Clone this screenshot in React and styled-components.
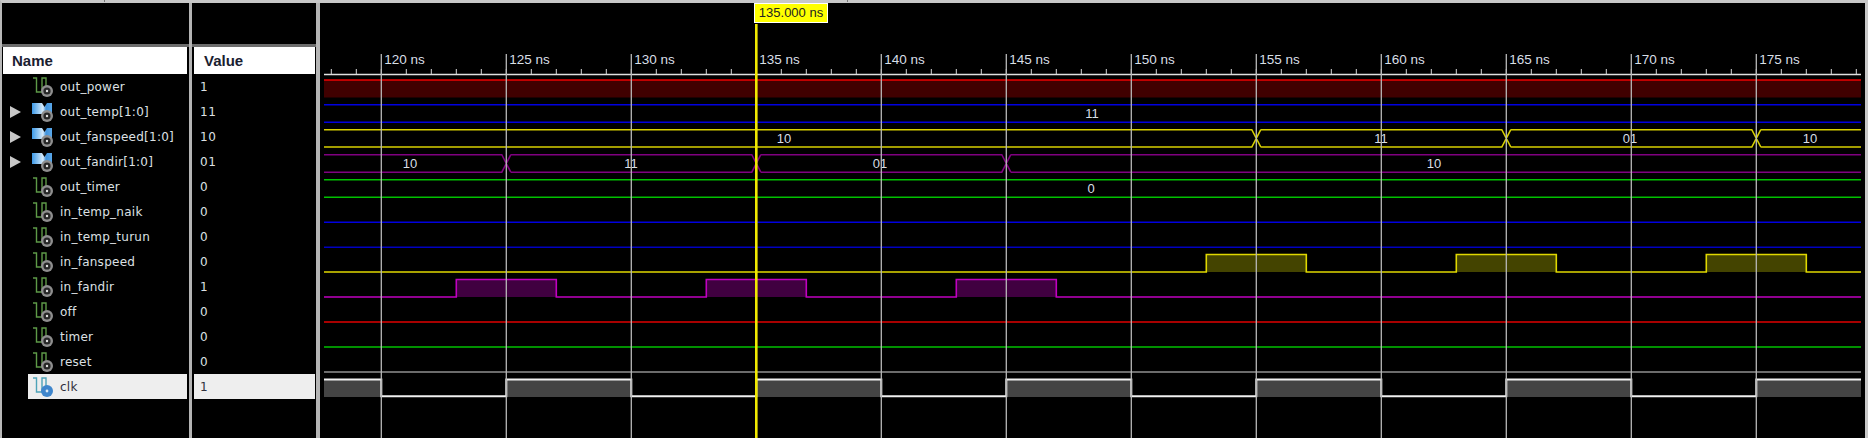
import React from 'react';
import styled, { createGlobalStyle } from 'styled-components';

const Global = createGlobalStyle`
  html, body { margin: 0; padding: 0; background: #000; }
  body { width: 1868px; height: 438px; overflow: hidden; }
`;

const Frame = styled.div`
  position: relative;
  width: 1868px; height: 438px; box-sizing: border-box;
  display: flex; background: #000;
  border-top: 3px solid #c8c8c8; border-left: 2px solid #b8b8b8; border-right: 3px solid #c8c8c8;
  font-family: "DejaVu Sans", sans-serif;
`;
const Notch = styled.i`
  position: absolute; top: -3px; left: ${p => p.$x}px; width: 1px; height: 2px; background: #777;
`;
const Panel = styled.section`
  width: ${p => p.$w}px; flex: none; display: flex; flex-direction: column;
  border-right: ${p => p.$sep}px solid #b4b4b4;
`;
const HeadSpace = styled.div`
  height: 41px; border-bottom: 3px solid #6c6c6c; flex: none;
`;
const Header = styled.div`
  height: 27px; margin: 0 ${p => p.$mr}px 0 ${p => p.$ml}px; background: #fff; color: #1a2030;
  font: bold 15px "Liberation Sans", sans-serif; line-height: 28px; padding-left: ${p => p.$pl}px;
`;
const Rows = styled.div`display: flex; flex-direction: column; padding-top: 0;`;
const Row = styled.div`
  height: 25px; display: flex; align-items: center; box-sizing: border-box;
  margin-left: ${p => p.$ml}px; margin-right: ${p => p.$mr}px;
  padding-left: ${p => p.$pl}px;
  background: ${p => p.$sel ? '#eeeeee' : 'transparent'};
  color: ${p => p.$sel ? '#30303c' : '#dde0e4'};
  font-size: 12px; letter-spacing: ${p => p.$ls}px; white-space: nowrap;
`;
const Arrow = styled.i`
  flex: none; width: 0; height: 0; margin-left: 8px;
  border-left: 11px solid #c8c8c8; border-top: 6px solid transparent; border-bottom: 6px solid transparent;
`;
const IconSlot = styled.span`
  flex: none; display: block; width: 22px; height: 20px; margin-right: 6px;
`;
const Expander = styled.span`
  flex: none; width: 30px; display: flex;
`;
const WavePanel = styled.section`flex: 1; position: relative; min-width: 0;`;
const Wave = styled.svg`display: block; width: 100%; height: 100%;`;
const CursorLabel = styled.div`
  position: absolute; left: 434px; top: 0; width: 74px; height: 20px; box-sizing: border-box;
  background: #ffff00; border: 1px solid #fff; color: #222;
  font: 13px "Liberation Sans", sans-serif; line-height: 18px; text-align: center; white-space: nowrap;
`;

const SIGNALS = [
  { name: 'out_power', value: '1' },
  { name: 'out_temp[1:0]', value: '11', bus: true },
  { name: 'out_fanspeed[1:0]', value: '10', bus: true },
  { name: 'out_fandir[1:0]', value: '01', bus: true },
  { name: 'out_timer', value: '0' },
  { name: 'in_temp_naik', value: '0' },
  { name: 'in_temp_turun', value: '0' },
  { name: 'in_fanspeed', value: '0' },
  { name: 'in_fandir', value: '1' },
  { name: 'off', value: '0' },
  { name: 'timer', value: '0' },
  { name: 'reset', value: '0' },
  { name: 'clk', value: '1', sel: true },
];

function Gear({ cx, cy, blue }) {
  return blue ? (
    <g>
      <circle cx={cx} cy={cy} r="6" fill="#3f86cc" />
      <circle cx={cx} cy={cy} r="1.4" fill="#dbe9f5" />
    </g>
  ) : (
    <g>
      <circle cx={cx} cy={cy} r="6" fill="#8e8e8e" />
      <circle cx={cx} cy={cy} r="3.6" fill="#262626" />
      <circle cx={cx} cy={cy} r="1.2" fill="#e0e0e0" />
    </g>
  );
}
function SignalIcon({ bus, sel }) {
  if (bus) {
    return (
      <svg width="22" height="20" viewBox="0 0 22 20">
        <defs>
          <linearGradient id="busFill" x1="0" y1="0" x2="1" y2="0">
            <stop offset="0" stopColor="#3d9ae8" />
            <stop offset="0.55" stopColor="#d8ecfb" />
            <stop offset="0.7" stopColor="#3f92dc" />
            <stop offset="1" stopColor="#5aa8ea" />
          </linearGradient>
        </defs>
        <path d="M0 1H10L12.5 5L15 1H20V12H0Z" fill="url(#busFill)" />
        <Gear cx={15} cy={14} />
      </svg>
    );
  }
  const c = sel ? '#4ea3b8' : '#5e9a48';
  return (
    <svg width="22" height="20" viewBox="0 0 22 20">
      <path d="M1 1H4.5V15H10V1H14V9" stroke={c} strokeWidth="1.4" fill="none" />
      <Gear cx={15} cy={14} blue={sel} />
    </svg>
  );
}

const X0 = 320; // the wave panel's left edge on the page
const px = t => 381.3 + (t - 120) * 25 - X0;
const L = 324 - X0, R = 1861 - X0;
const py = y => y - 3; // page y to panel y

function Bus({ top, bot, color, edges, labels }) {
  const mid = (top + bot) / 2, s = 4.5;
  const xs = edges.map(px);
  let d = '';
  [top, bot].forEach(y => {
    let cur = L;
    xs.forEach(x => { d += `M${cur} ${y}L${x - s} ${y}L${x + s} ${y === top ? bot : top}`; cur = x + s; });
    d += `M${cur} ${y}L${R} ${y}`;
  });
  return (
    <g>
      <path d={d} stroke={color} strokeWidth="1.6" fill="none" />
      {labels.map(([x, t]) => (
        <ValueText key={x} x={x - X0} y={mid + 4.5} textAnchor="middle">{t}</ValueText>
      ))}
    </g>
  );
}
const ValueText = styled.text`font: 13px "Liberation Sans", sans-serif; fill: #d8dfe6;`;
const RulerText = styled.text`font: 13.5px "Liberation Sans", sans-serif; fill: #d8dfe6;`;

function Pulses({ hi, lo, color, fill, spans, sw = 1.6 }) {
  let d = `M${L} ${lo}`;
  spans.forEach(([a, b]) => { d += `L${px(a)} ${lo}L${px(a)} ${hi}L${px(b)} ${hi}L${px(b)} ${lo}`; });
  d += `L${R} ${lo}`;
  return (
    <g>
      {spans.map(([a, b]) => <rect key={a} x={px(a)} y={hi} width={px(b) - px(a)} height={lo - hi} fill={fill} />)}
      <path d={d} stroke={color} strokeWidth={sw} fill="none" />
    </g>
  );
}
const Flat = ({ y, color, sw = 1.6 }) => <path d={`M${L} ${y}H${R}`} stroke={color} strokeWidth={sw} />;

function WaveChart() {
  const ticks = [];
  for (let t = 118; t <= 180; t++) if (px(t) >= L && px(t) <= R) ticks.push(t);
  const majors = [120, 125, 130, 135, 140, 145, 150, 155, 160, 165, 170, 175];
  const clk = [[115.7, 120]];
  for (let t = 125; t < 175; t += 10) clk.push([t, t + 5]);
  return (
    <Wave viewBox="0 0 1545 435">
      {/* ruler */}
      <path d={`M${L} ${py(74.5)}H${R}`} stroke="#e0e0e0" strokeWidth="1.4" />
      {ticks.map(t => <path key={t} d={`M${px(t)} ${py(69)}V${py(74)}`} stroke="#d8d8d8" strokeWidth="1" />)}
      {majors.map(t => <RulerText key={t} x={px(t) + 3} y={py(64)}>{t} ns</RulerText>)}

      {/* out_power */}
      <rect x={L} y={py(80)} width={R - L} height={17.5} fill="#400000" />
      <Flat y={py(80)} color="#ee0000" />
      {/* out_temp */}
      <Bus top={py(104.7)} bot={py(122.2)} color="#0000e0" edges={[]} labels={[[1092, '11']]} />
      {/* out_fanspeed */}
      <Bus top={py(129.7)} bot={py(147)} color="#d8d000" edges={[155, 165, 175]}
        labels={[[784, '10'], [1381, '11'], [1630, '01'], [1810, '10']]} />
      {/* out_fandir */}
      <Bus top={py(154.7)} bot={py(172.2)} color="#800080" edges={[125, 135, 145]}
        labels={[[410, '10'], [631, '11'], [880, '01'], [1434, '10']]} />
      {/* out_timer */}
      <Bus top={py(179.7)} bot={py(197.2)} color="#00c000" edges={[]} labels={[[1091, '0']]} />
      <Flat y={py(222.3)} color="#0000e0" />
      <Flat y={py(247.2)} color="#0000c0" />
      <Pulses hi={py(254.5)} lo={py(272)} color="#e0d800" fill="#444400"
        spans={[[153, 157], [163, 167], [173, 177]]} />
      <Pulses hi={py(279.5)} lo={py(297)} color="#c000c0" fill="#400040"
        spans={[[123, 127], [133, 137], [143, 147]]} />
      <Flat y={py(322)} color="#e00000" />
      <Flat y={py(347)} color="#00c000" />
      <Flat y={py(372)} color="#909090" />
      {/* clk */}
      {clk.concat([[175, 179.2]]).map(([a, b]) => (
        <rect key={a} x={Math.max(px(a), L)} y={py(379.5)} width={Math.min(px(b), R) - Math.max(px(a), L)} height={17.5} fill="#444" />
      ))}
      <path
        d={(() => {
          let d = `M${L} ${py(379.5)}L${px(120)} ${py(379.5)}L${px(120)} ${py(396.3)}`;
          for (let t = 125; t < 175; t += 10) d += `L${px(t)} ${py(396.3)}L${px(t)} ${py(379.5)}L${px(t + 5)} ${py(379.5)}L${px(t + 5)} ${py(396.3)}`;
          return d + `L${px(175)} ${py(396.3)}L${px(175)} ${py(379.5)}L${R} ${py(379.5)}`;
        })()}
        stroke="#f0f0f0" strokeWidth="2" fill="none"
      />
      {/* grid */}
      {majors.filter(t => t !== 135).map(t => (
        <path key={t} d={`M${px(t)} ${py(54)}V435`} stroke="#b8b8b8" strokeWidth="1.3" />
      ))}
      {/* cursor */}
      <path d={`M${px(135)} ${py(24)}V435`} stroke="#f0e800" strokeWidth="2.6" />
    </Wave>
  );
}

export default function App() {
  return (
    <Frame>
      <Global />
      <Notch $x={102} />
      <Notch $x={845} />
      <Panel $w={187} $sep={3}>
        <HeadSpace />
        <Header $ml={1} $mr={2} $pl={9}>Name</Header>
        <Rows>
          {SIGNALS.map(s => (
            <Row key={s.name} $ls={0.25} $ml={s.sel ? 26 : 0} $mr={s.sel ? 2 : 0} $pl={s.sel ? 4 : 0} $sel={s.sel}>
              {!s.sel && <Expander>{s.bus && <Arrow />}</Expander>}
              <IconSlot><SignalIcon bus={s.bus} sel={s.sel} /></IconSlot>
              {s.name}
            </Row>
          ))}
        </Rows>
      </Panel>
      <Panel $w={124} $sep={4}>
        <HeadSpace />
        <Header $ml={2} $mr={1} $pl={10}>Value</Header>
        <Rows>
          {SIGNALS.map(s => (
            <Row key={s.name} $ls={0.6} $ml={s.sel ? 2 : 0} $mr={s.sel ? 1 : 0} $pl={s.sel ? 6 : 8} $sel={s.sel}>{s.value}</Row>
          ))}
        </Rows>
      </Panel>
      <WavePanel>
        <WaveChart />
        <CursorLabel>135.000 ns</CursorLabel>
      </WavePanel>
    </Frame>
  );
}
